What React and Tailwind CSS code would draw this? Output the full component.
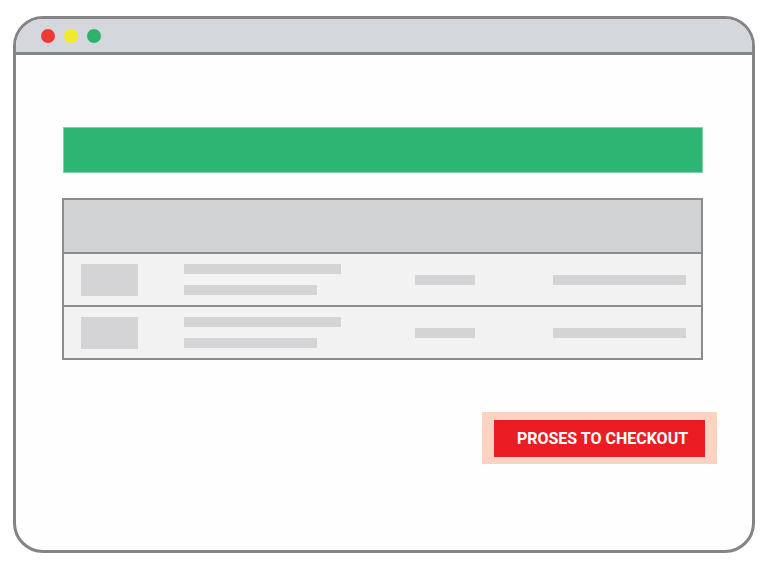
export default function App() {
  const rows = [0, 1];
  return (
    <div className="w-[768px] h-[575px] bg-white pl-[13px] pt-[16px]" style={{ fontFamily: "Roboto, 'Liberation Sans', sans-serif" }}>
      <div className="w-[742px] h-[537px] border-[3px] border-[#848484] rounded-[30px] overflow-hidden flex flex-col bg-[#fefefe]">
        <div className="h-[36px] shrink-0 bg-[#d4d7dc] border-b-[3px] border-[#848484] flex items-center pl-[25px] gap-[9px]">
          <div className="w-[14px] h-[14px] rounded-full bg-[#ee3b33]" />
          <div className="w-[14px] h-[14px] rounded-full bg-[#f1e92a]" />
          <div className="w-[14px] h-[14px] rounded-full bg-[#2db36b]" />
        </div>
        <div className="flex flex-col pl-[47px] pr-[49px] pt-[72px]">
          <div className="h-[46px] bg-[#2db673] border border-[#7fd2a6]" />
          <div className="mt-[25px] -ml-px border-2 border-[#8c8c8c] flex flex-col">
            <div className="h-[54px] bg-[#d1d2d4] border-b-2 border-[#8c8c8c]" />
            {rows.map((r) => (
              <div key={r} className={`bg-[#f2f2f2] flex items-center ${r === 0 ? "h-[53px] border-b-2 border-[#8c8c8c]" : "h-[51px]"}`}>
                <div className="ml-[17px] w-[57px] h-[32px] bg-[#d4d4d6]" />
                <div className="ml-[46px] flex flex-col gap-[11px]">
                  <div className="w-[157px] h-[10px] bg-[#d4d4d6]" />
                  <div className="w-[133px] h-[10px] bg-[#d4d4d6]" />
                </div>
                <div className="ml-[74px] w-[60px] h-[10px] bg-[#d4d4d6]" />
                <div className="ml-[78px] w-[133px] h-[10px] bg-[#d4d4d6]" />
              </div>
            ))}
          </div>
          <div className="mt-[52px] flex justify-end -mr-[14px]">
            <div className="bg-[#fcd3c1] pl-[12px] pr-[12px] pt-[8px] pb-[7px]">
              <div className="w-[211px] h-[37px] bg-[#ec1c24] flex items-center justify-center text-white font-bold text-[16px] pt-[1px] pl-[6px]">
                PROSES TO CHECKOUT
              </div>
            </div>
          </div>
        </div>
      </div>
    </div>
  );
}
